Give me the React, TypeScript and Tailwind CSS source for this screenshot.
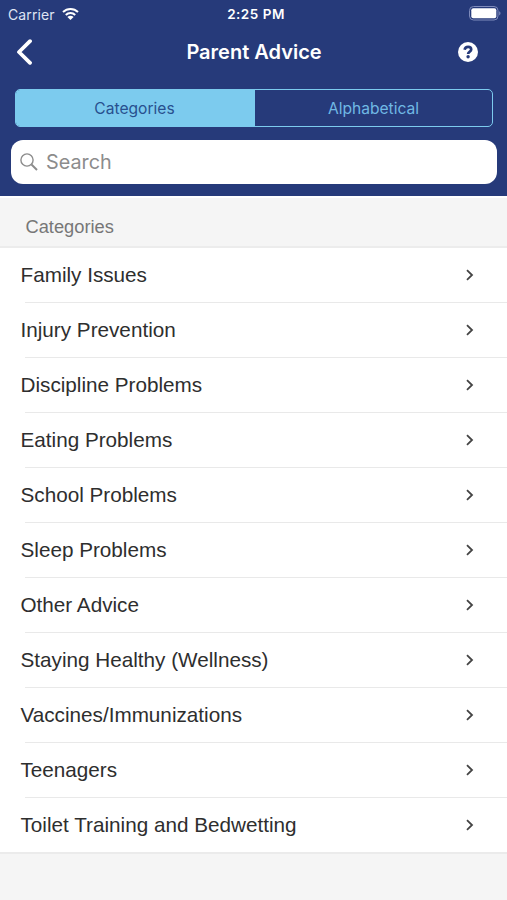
const categories = [
    "Family Issues",
    "Injury Prevention",
    "Discipline Problems",
    "Eating Problems",
    "School Problems",
    "Sleep Problems",
    "Other Advice",
    "Staying Healthy (Wellness)",
    "Vaccines/Immunizations",
    "Teenagers",
    "Toilet Training and Bedwetting",
];

function StatusBar() {
    return (
        <div className="flex h-7 items-center justify-between pl-2 pr-[6px] text-white">
            <div className="flex flex-1 items-center gap-[7px]">
                <span className="text-[14px] tracking-[0.1px] text-[#dfe4f4]">Carrier</span>
                <svg className="-mt-[2px] h-[13px] w-[17px]" viewBox="0 0 17 13" fill="none" stroke="currentColor" strokeWidth="2">
                    <path d="M1 5C5.2 0.9 11.8 0.9 16 5" />
                    <path d="M3.8 8C6.4 5.4 10.6 5.4 13.2 8" />
                    <path d="M5.4 10C7.1 8.3 9.9 8.3 11.6 10L8.5 13Z" fill="currentColor" stroke="none" />
                </svg>
            </div>
            <span className="pl-[3px] text-[13.5px] font-semibold tracking-[0.5px]">2:25 PM</span>
            <div className="flex flex-1 justify-end">
                <svg className="-mt-[2px] h-[15px] w-8" viewBox="0 0 32 15">
                    <rect x="0.5" y="0.5" width="28.5" height="13.5" rx="4" fill="none" stroke="#7f8bbb" />
                    <rect x="2.3" y="2.3" width="25" height="10" rx="2" fill="#fff" />
                    <path d="M30.3 5.2C31.8 5.8 31.8 8.8 30.3 9.4Z" fill="#8f9bc8" />
                </svg>
            </div>
        </div>
    );
}

export default function App() {
    return (
        <div className="flex h-[900px] w-[507px] flex-col overflow-hidden bg-[#f5f5f5] font-['Inter',sans-serif]">
            <header className="h-[196px] shrink-0 bg-[#263a7a]">
                <StatusBar />

                {/* Navigation */}
                <div className="grid h-12 grid-cols-[1fr_auto_1fr] items-center pl-4 pr-[15px]">
                    <button className="w-5 text-white">
                        <svg className="h-[26px] w-4" viewBox="0 0 16 26" fill="none" stroke="currentColor" strokeWidth="3.8" strokeLinecap="round" strokeLinejoin="round">
                            <path d="M14 2.2L3 13L14 23.8" />
                        </svg>
                    </button>
                    <h1 className="text-[20px] font-semibold text-white">Parent Advice</h1>
                    <button className="mr-[14px] w-5 justify-self-end">
                        <svg className="h-5 w-5" viewBox="0 0 20 20">
                            <circle cx="10" cy="10" r="10" fill="#fff" />
                            <path d="M6.6 7.8C7 5.8 8.4 4.9 10.1 4.9C12 4.9 13.2 6 13.2 7.5C13.2 9.7 10.1 9.4 10.1 12" fill="none" stroke="#263a7a" strokeWidth="2.7" />
                            <circle cx="10.1" cy="14.8" r="1.7" fill="#263a7a" />
                        </svg>
                    </button>
                </div>

                {/* Segmented control */}
                <div className="ml-[15px] mr-[14px] mt-[13px] flex h-[38px] overflow-hidden rounded-[5px] border-[1.5px] border-[#7ccbee] text-[15.6px]">
                    <button className="flex-1 bg-[#7ccbee] pr-[2px] pt-px text-[#28508f]">Categories</button>
                    <button className="flex-1 pt-px text-[#70b8e4]">Alphabetical</button>
                </div>

                {/* Search field */}
                <div className="ml-[11px] mr-[10px] mt-[13px] flex h-11 items-center gap-2 rounded-[12px] bg-white pl-[9px] text-[#8c8c8c]">
                    <svg className="h-[18px] w-[18px]" viewBox="0 0 18 18" fill="none" stroke="currentColor" strokeWidth="1.4">
                        <circle cx="7" cy="7" r="6.1" />
                        <path d="M11.5 11.5L17 17" strokeWidth="2" />
                    </svg>
                    <span className="pt-px text-[19.8px]">Search</span>
                </div>
            </header>

            <div className="flex h-[52px] shrink-0 items-center border-b-2 border-t-2 border-b-[#ececec] border-t-white pl-[25.5px] pt-[10px] font-['Liberation_Sans',Arial,sans-serif] text-[18.3px] text-[#777]">
                Categories
            </div>

            <ul className="border-b-2 border-[#ebebeb] bg-white font-['Liberation_Sans',Arial,sans-serif] text-[20.7px] text-[#2e2e2e]">
                {categories.map((name) => (
                    <li key={name} className="group">
                        <div className="flex h-[54px] items-center justify-between pl-[20.5px] pr-8">
                            <span>{name}</span>
                            <svg className="h-3 w-[10px]" viewBox="0 0 10 12" fill="none" stroke="#444" strokeWidth="1.8">
                                <path d="M2 1.2L7 6L2 10.8" />
                            </svg>
                        </div>
                        <div className="ml-[25px] h-px bg-[#e9e9e9] group-last:hidden" />
                    </li>
                ))}
            </ul>
        </div>
    );
}
